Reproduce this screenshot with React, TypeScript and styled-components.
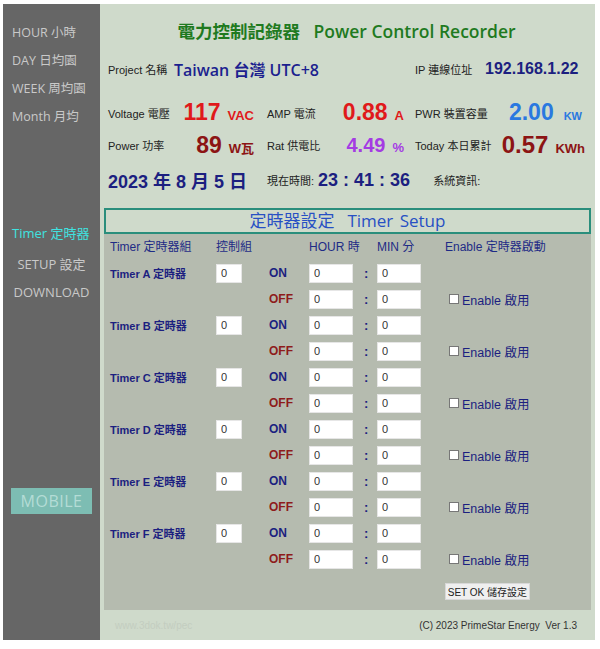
import React from "react";
import styled, { createGlobalStyle } from "styled-components";

const GlobalStyle = createGlobalStyle`
  html, body {
    margin: 0;
    padding: 0;
    background: #ffffff;
  }
  body {
    font-family: "Liberation Sans", "Noto Sans CJK TC", sans-serif;
  }
`;

const CJK = `"Noto Sans CJK TC", sans-serif`;

const Frame = styled.div`
  display: grid;
  grid-template-columns: 97px 495px;
  margin: 4px 0 0 3px;
  width: 592px;
  height: 636px;
`;

const Sidebar = styled.nav`
  background: #666666;
  display: flex;
  flex-direction: column;
  padding-top: 19px;
  font-family: "Open Sans", ${CJK};
`;

const NavItem = styled.div<{ $active?: boolean; $center?: boolean }>`
  height: 28px;
  line-height: 20px;
  font-size: ${(p) => (p.$center || p.$active ? 13 : 12.5)}px;
  color: ${(p) => (p.$active ? "#3fe3e0" : "#c9c9c9")};
  padding-left: ${(p) => (p.$center ? "0" : "9px")};
  text-align: ${(p) => (p.$center ? "center" : "left")};
  white-space: nowrap;
`;

const NavGap = styled.div<{ $h: number }>`
  height: ${(p) => p.$h}px;
`;

const MobileButton = styled.div`
  margin: 0 8px 0 8px;
  height: 26px;
  background: #7dbdb3;
  color: #b4dcd6;
  font-size: 16px;
  letter-spacing: 0.5px;
  display: flex;
  align-items: center;
  justify-content: center;
`;

const Main = styled.main`
  background: #cfdacb;
  display: flex;
  flex-direction: column;
`;

const Title = styled.h1`
  margin: 0;
  height: 52px;
  padding-top: 15px;
  box-sizing: border-box;
  font-family: "Open Sans", ${CJK};
  font-weight: 600;
  font-size: 17.5px;
  line-height: 24px;
  color: #1f7a1f;
  text-align: center;
  padding-right: 2px;
`;

const InfoRow = styled.div<{ $top: number }>`
  display: grid;
  grid-template-columns: 159px 148px 175px;
  align-items: center;
  height: 26px;
  margin-top: ${(p) => p.$top}px;
  padding-left: 8px;
`;

const Stat = styled.div<{ $pr: number }>`
  display: flex;
  align-items: center;
  justify-content: space-between;
  padding-right: ${(p) => p.$pr}px;
  white-space: nowrap;
`;

const Label = styled.span`
  font-size: 11px;
  color: #222;
`;

const Reading = styled.span`
  display: flex;
  align-items: baseline;
`;

const Value = styled.span<{ $color: string; $size: number }>`
  font-weight: bold;
  color: ${(p) => p.$color};
  font-size: ${(p) => p.$size}px;
`;

const Unit = styled.span<{ $color: string; $size?: number; $gap?: number }>`
  font-weight: bold;
  color: ${(p) => p.$color};
  font-size: ${(p) => p.$size ?? 13}px;
  margin-left: ${(p) => p.$gap ?? 7}px;
`;

const Pair = styled.div<{ $labelW: number; $span?: number }>`
  display: flex;
  align-items: center;
  grid-column: span ${(p) => p.$span ?? 1};
  white-space: nowrap;
  & > ${Label} {
    width: ${(p) => p.$labelW}px;
    flex: none;
  }
`;

const Project = styled.span`
  font-family: "Open Sans", ${CJK};
  font-weight: 600;
  font-size: 16px;
  color: #1c1f8f;
`;

const Navy = styled.span<{ $size: number }>`
  font-weight: bold;
  font-size: ${(p) => p.$size}px;
  color: #1c1f80;
  white-space: nowrap;
`;

const Panel = styled.section`
  margin: 15px 4px 0 4px;
  background: #b5bbaf;
  flex: 1;
  display: flex;
  flex-direction: column;
`;

const PanelTitle = styled.h2`
  margin: 0;
  height: 26px;
  box-sizing: border-box;
  border: 2px solid #2a8e7c;
  background: #cfdacb;
  font-family: "Open Sans", ${CJK};
  font-weight: 400;
  font-size: 17px;
  color: #2750c4;
  text-align: center;
  line-height: 21px;
  word-spacing: 2px;
`;

const TimerGrid = styled.div`
  display: grid;
  grid-template-columns: 106px 53px 40px 55px 13px 68px 1fr;
  grid-auto-rows: 26px;
  align-items: center;
  padding: 0 0 0 6px;
`;

const HeadCell = styled.div<{ $span?: number }>`
  font-size: 12px;
  color: #1e2b86;
  grid-column: span ${(p) => p.$span ?? 1};
  white-space: nowrap;
  line-height: 24px;
`;

const TimerName = styled.div`
  font-size: 11px;
  font-weight: bold;
  color: #1c1f80;
  white-space: nowrap;
`;

const State = styled.div<{ $off?: boolean }>`
  font-size: 12px;
  font-weight: bold;
  color: ${(p) => (p.$off ? "#8e1b1b" : "#1c1f80")};
`;

const Field = styled.input<{ $w: number }>`
  box-sizing: border-box;
  width: ${(p) => p.$w}px;
  height: 19px;
  border: 1px solid #e6e6e6;
  background: #ffffff;
  font-family: "Liberation Sans", sans-serif;
  font-size: 11px;
  color: #333;
  padding: 0 0 0 4px;
  outline: none;
`;

const Colon = styled.div`
  font-size: 13px;
  font-weight: bold;
  color: #1c1f80;
`;

const EnableBox = styled.label`
  display: flex;
  align-items: center;
  gap: 3px;
  font-size: 12.5px;
  color: #1c1f80;
  padding-left: 4px;
  white-space: nowrap;
`;

const Check = styled.input`
  appearance: none;
  margin: 0;
  width: 10px;
  height: 10px;
  background: #fff;
  border: 1px solid #777;
`;

const Blank = styled.div``;

const SaveRow = styled.div`
  display: flex;
  justify-content: flex-end;
  padding: 11px 61px 0 0;
`;

const SaveButton = styled.button`
  height: 17px;
  padding: 0 2px;
  border: 1px solid #d8d8d8;
  background: #efefef;
  font-family: "Liberation Sans", ${CJK};
  font-size: 10px;
  color: #222;
`;

const Footer = styled.footer`
  height: 30px;
  display: flex;
  align-items: center;
  justify-content: space-between;
  padding: 0 18px 0 15px;
  font-size: 10px;
`;

const Site = styled.span`
  color: #c3cdc0;
`;

const Copy = styled.span`
  color: #333;
`;

const timers = ["A", "B", "C", "D", "E", "F"];

const TimerRows = ({ id }: { id: string }) => (
  <>
    <TimerName>Timer {id} 定時器</TimerName>
    <Field $w={26} defaultValue="0" />
    <State>ON</State>
    <Field $w={44} defaultValue="0" />
    <Colon>:</Colon>
    <Field $w={44} defaultValue="0" />
    <Blank />
    <Blank />
    <Blank />
    <State $off>OFF</State>
    <Field $w={44} defaultValue="0" />
    <Colon>:</Colon>
    <Field $w={44} defaultValue="0" />
    <EnableBox>
      <Check type="checkbox" />
      Enable 啟用
    </EnableBox>
  </>
);

const App = () => (
  <>
    <GlobalStyle />
    <Frame>
      <Sidebar>
        <NavItem>HOUR 小時</NavItem>
        <NavItem>DAY 日均園</NavItem>
        <NavItem>WEEK 周均園</NavItem>
        <NavItem>Month 月均</NavItem>
        <NavGap $h={88} />
        <NavItem $active>Timer 定時器</NavItem>
        <NavGap $h={3} />
        <NavItem $center>SETUP 設定</NavItem>
        <NavItem $center>DOWNLOAD</NavItem>
        <NavGap $h={178} />
        <MobileButton>MOBILE</MobileButton>
      </Sidebar>

      <Main>
        <Title>電力控制記錄器&nbsp;&nbsp; Power Control Recorder</Title>

        <InfoRow $top={0}>
          <Pair $labelW={66} $span={2}>
            <Label>Project 名稱</Label>
            <Project>Taiwan 台灣 UTC+8</Project>
          </Pair>
          <Pair $labelW={70}>
            <Label>IP 連線位址</Label>
            <Navy $size={16}>192.168.1.22</Navy>
          </Pair>
        </InfoRow>

        <InfoRow $top={17}>
          <Stat $pr={13}>
            <Label>Voltage 電壓</Label>
            <Reading>
              <Value $color="#e0191b" $size={23}>117</Value>
              <Unit $color="#e0191b">VAC</Unit>
            </Reading>
          </Stat>
          <Stat $pr={11}>
            <Label>AMP 電流</Label>
            <Reading>
              <Value $color="#e0191b" $size={23}>0.88</Value>
              <Unit $color="#e0191b">A</Unit>
            </Reading>
          </Stat>
          <Stat $pr={8}>
            <Label>PWR 裝置容量</Label>
            <Reading>
              <Value $color="#2a78e0" $size={23}>2.00</Value>
              <Unit $color="#2a78e0" $size={11} $gap={10}>KW</Unit>
            </Reading>
          </Stat>
        </InfoRow>

        <InfoRow $top={6}>
          <Stat $pr={13}>
            <Label>Power 功率</Label>
            <Reading>
              <Value $color="#8c1414" $size={23}>89</Value>
              <Unit $color="#8c1414">W瓦</Unit>
            </Reading>
          </Stat>
          <Stat $pr={11}>
            <Label>Rat 供電比</Label>
            <Reading>
              <Value $color="#a43be3" $size={20}>4.49</Value>
              <Unit $color="#a43be3">%</Unit>
            </Reading>
          </Stat>
          <Stat $pr={5}>
            <Label>Today 本日累計</Label>
            <Reading>
              <Value $color="#8c1414" $size={24}>0.57</Value>
              <Unit $color="#8c1414">KWh</Unit>
            </Reading>
          </Stat>
        </InfoRow>

        <InfoRow $top={10}>
          <Navy $size={18}>2023 年 8 月 5 日</Navy>
          <Pair $labelW={51}>
            <Label>現在時間:</Label>
            <Navy $size={18}>23 : 41 : 36</Navy>
          </Pair>
          <Pair $labelW={60}>
            <Label>&nbsp;&nbsp;&nbsp;&nbsp;&nbsp;&nbsp;系統資訊:</Label>
          </Pair>
        </InfoRow>

        <Panel>
          <PanelTitle>定時器設定&nbsp; Timer Setup</PanelTitle>
          <TimerGrid>
            <HeadCell>Timer 定時器組</HeadCell>
            <HeadCell $span={2}>控制組</HeadCell>
            <HeadCell $span={2}>HOUR 時</HeadCell>
            <HeadCell>MIN 分</HeadCell>
            <HeadCell>Enable 定時器啟動</HeadCell>
            {timers.map((t) => (
              <TimerRows key={t} id={t} />
            ))}
          </TimerGrid>
          <SaveRow>
            <SaveButton>SET OK 儲存設定</SaveButton>
          </SaveRow>
        </Panel>

        <Footer>
          <Site>www.3dok.tw/pec</Site>
          <Copy>(C) 2023 PrimeStar Energy&nbsp; Ver 1.3</Copy>
        </Footer>
      </Main>
    </Frame>
  </>
);

export default App;
